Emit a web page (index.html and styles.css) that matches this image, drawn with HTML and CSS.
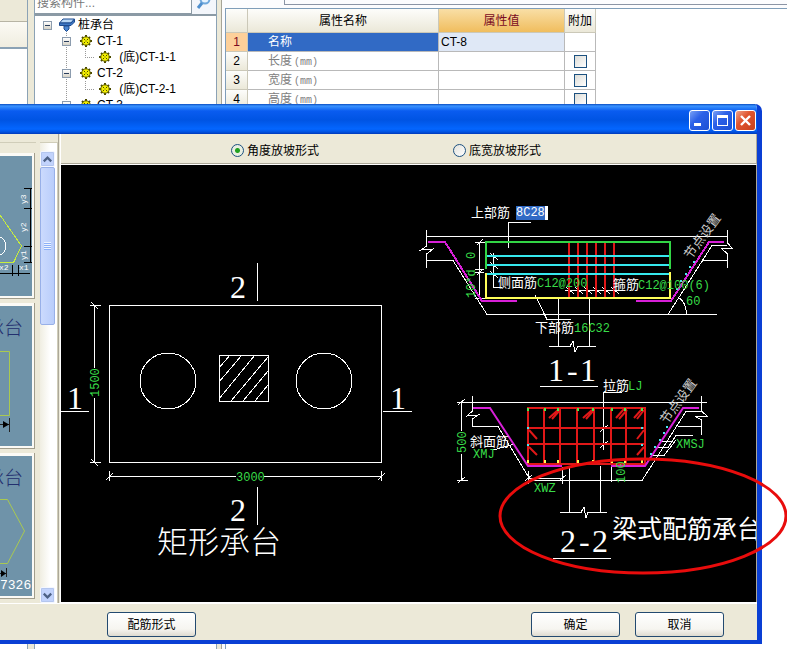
FILE: index.html
```html
<!DOCTYPE html>
<html lang="zh-CN">
<head>
<meta charset="utf-8">
<title>桩承台</title>
<link rel="stylesheet" href="styles.css">
</head>
<body>
<svg class="defs" aria-hidden="true">
  <symbol id="gear" viewBox="0 0 12 12">
    <path d="M6 0v12M0 6h12M2 2l8 8M10 2l-8 8" stroke="#4c4a00" stroke-width="2"/>
    <circle cx="6" cy="6" r="4.2" fill="#f4f000" stroke="#5a5800"/>
    <path d="M4 4h1v1h-1zM7 4h1v1h-1zM5.500 5.500h1v1h-1zM4 7h1v1h-1zM7 7h1v1h-1z" fill="#4c4a00"/>
  </symbol>
  <symbol id="pile" viewBox="0 0 16 14">
    <path d="M4 1H15.500L12 5H.5z" fill="#b9d8f6" stroke="#1d4b8f"/>
    <path d="M.5 5H12L15.500 1V4L12 7.500H.5z" fill="#3e78c4" stroke="#1d4b8f"/>
    <path d="M5 8H10V11L7.500 13.500L5 11z" fill="#4b87d2" stroke="#1d4b8f"/>
  </symbol>
</svg>

<main class="app">
  <aside class="rail"><div class="rail-head"></div><div class="rail-tab"></div><div class="rail-body"></div></aside>

  <section class="browser">
    <form class="search">
      <input type="text" placeholder="搜索构件..." aria-label="搜索构件">
      <button type="button" aria-label="搜索"><svg viewBox="0 0 16 16"><circle cx="9" cy="5" r="4.500" fill="#e6f3ff" stroke="#6fa8dc" stroke-width="2"/><path d="M6 9L2 14" stroke="#4f8fce" stroke-width="3"/></svg></button>
    </form>
    <div class="tree">
      <div class="node"><span class="cell"><button class="toggle" aria-label="折叠"></button></span><span class="cell"><svg class="pile"><use href="#pile"/></svg></span><span class="name">桩承台</span></div>
      <div class="node"><span class="cell"></span><span class="cell trunk"><button class="toggle" aria-label="折叠"></button></span><span class="cell"><svg class="gear"><use href="#gear"/></svg></span><span class="name"><span class="latin">CT-1</span></span></div>
      <div class="node"><span class="cell"></span><span class="cell trunk"></span><span class="cell elbow"></span><span class="cell"><svg class="gear"><use href="#gear"/></svg></span><span class="name"><span class="latin"> (</span>底<span class="latin">)CT-1-1</span></span></div>
      <div class="node"><span class="cell"></span><span class="cell trunk"><button class="toggle" aria-label="折叠"></button></span><span class="cell"><svg class="gear"><use href="#gear"/></svg></span><span class="name"><span class="latin">CT-2</span></span></div>
      <div class="node"><span class="cell"></span><span class="cell trunk"></span><span class="cell elbow"></span><span class="cell"><svg class="gear"><use href="#gear"/></svg></span><span class="name"><span class="latin"> (</span>底<span class="latin">)CT-2-1</span></span></div>
      <div class="node"><span class="cell"></span><span class="cell trunk"><button class="toggle" aria-label="折叠"></button></span><span class="cell"><svg class="gear"><use href="#gear"/></svg></span><span class="name"><span class="latin">CT-3</span></span></div>
    </div>
  </section>

  <section class="props">
    <div class="props-tab"></div>
    <div class="props-body">
      <table>
        <thead><tr><th class="num"></th><th class="attr">属性名称</th><th class="value current">属性值</th><th class="extra">附加</th></tr></thead>
        <tbody>
          <tr class="selected"><th>1</th><td class="attr">名称</td><td class="value"><span class="latin">CT-8</span></td><td></td></tr>
          <tr><th>2</th><td class="attr">长度<span class="unit">(mm)</span></td><td></td><td class="extra"><input type="checkbox" aria-label="长度附加"></td></tr>
          <tr><th>3</th><td class="attr">宽度<span class="unit">(mm)</span></td><td></td><td class="extra"><input type="checkbox" aria-label="宽度附加"></td></tr>
          <tr><th>4</th><td class="attr">高度<span class="unit">(mm)</span></td><td></td><td class="extra"><input type="checkbox" aria-label="高度附加"></td></tr>
        </tbody>
      </table>
    </div>
  </section>
</main>

<div class="dialog" role="dialog" aria-label="矩形承台">
  <header class="titlebar">
    <button aria-label="最小化"><svg viewBox="0 0 19 19"><path d="M4 12h7v3H4z" fill="#fff"/></svg></button>
    <button aria-label="最大化"><svg viewBox="0 0 19 19"><path d="M4 4h11v11H4zM5 7v7h9V7z" fill="#fff" fill-rule="evenodd"/></svg></button>
    <button class="close" aria-label="关闭"><svg viewBox="0 0 19 19"><path d="M5 5l9 9M14 5l-9 9" stroke="#fff" stroke-width="2.400"/></svg></button>
  </header>

  <div class="workspace">
    <aside class="shapes">
      <div class="cards">
        <div class="card"><svg viewBox="0 156 32 140">
          <g fill="none" shape-rendering="crispEdges"><path d="M0 215L21.500 246L13.500 262.500H0" stroke="#c8ee3c"/><circle cx="-4" cy="246" r="10" stroke="#fff"/>
          <path d="M30.500 188V263M24 188.500h8M24 208.500h8M24 246.500h8M24 262.500h8M0 273.500h30M12.500 265v11M18.500 265v11" stroke="#000"/></g>
          <g class="tiny"><text transform="translate(26 204) rotate(-90)">y3</text><text transform="translate(26 232) rotate(-90)">y2</text><text transform="translate(26 260) rotate(-90)">y1</text><text x="-1" y="270">x2</text><text x="19" y="270">x1</text></g>
        </svg></div>
        <div class="card"><svg viewBox="0 306 32 140">
          <text class="card-title" x="23" y="335">承台</text>
          <path d="M0 351.500H9.500V415.500H0" fill="none" stroke="#a9c951"/>
          <path d="M0 424.500H9M9.500 418v14" stroke="#222"/><path d="M3 421l6 3.500l-6 3.500z"/>
        </svg></div>
        <div class="card"><svg viewBox="0 456 32 140">
          <text class="card-title" x="23" y="485">承台</text>
          <path d="M0 499.500H7.500L24.500 531L7.500 563.500H0" fill="none" stroke="#a9c951"/>
          <path d="M0 573.500H6M6.500 568v9" stroke="#222"/><path d="M1 570l5 3.500l-5 3.500z"/>
          <text class="count" x="0" y="589">7326</text>
        </svg></div>
      </div>
      <div class="scrollbar">
        <button aria-label="向上滚动"><svg viewBox="0 0 14 14"><path d="M3 9l4-4l4 4" fill="none" stroke="#4d6185" stroke-width="2.400"/></svg></button>
        <div class="thumb"><i></i></div>
        <div class="track"></div>
        <button aria-label="向下滚动"><svg viewBox="0 0 14 14"><path d="M3 5l4 4l4-4" fill="none" stroke="#4d6185" stroke-width="2.400"/></svg></button>
      </div>
    </aside>

    <section class="detail">
      <div class="options">
        <label><input type="radio" name="slope" checked>角度放坡形式</label>
        <label><input type="radio" name="slope">底宽放坡形式</label>
      </div>
      <svg class="drawing" viewBox="61 165 695 437">
        <!-- plan view -->
        <g class="line">
          <path d="M109.500 305.500H381.500V462.500H109.500zM219.500 355.500H268.500V401.500H219.500z"/>
          <circle cx="168" cy="381" r="28"/><circle cx="324" cy="381" r="28"/>
          <path d="M219 368L230 355M219 382L242 355M219 399L255 355M231 401L268 357M243 401L268 371M255 401L268 385"/>
          <path d="M257.500 263V301M257.500 487V525M61 411.500H89M383 411.500H412"/>
          <path d="M94.500 305V368M94.500 398V463M90 305.500H101M90 462.500H101M91 302l7 7M91 459l7 7"/>
          <path d="M109 476.500H236M264 476.500H382M109.500 471V481M381.500 471V481M106 480l7-7M378 480l7-7"/>
        </g>
        <g class="mark"><text x="230" y="298">2</text><text x="230" y="521">2</text><text x="67" y="409">1</text><text x="390" y="409">1</text></g>
        <text class="caption" x="157" y="553">矩形承台</text>
        <g class="dim"><text x="236" y="481">3000</text><text transform="translate(99 397) rotate(-90)">1500</text></g>

        <!-- section 1-1 -->
        <g class="line">
          <path d="M426 236.500H727M426.500 230V246L421 250L433 249L426.500 254V268M426 260.500H453L487 314.500H717"/>
          <path d="M479.500 242V299M475 242.500H486M475 269.500H484M475 272.500H484M475 298.500H486M477 245l6-6M477 275l6-6"/>
          <path d="M531 222.500H508.500V248M493.500 253V287.500H502M490 253l8 7M490 262l8 7M490 271l8 7"/>
          <path d="M535 295L547 319.500H571M558.500 299V347M589.500 299V347M549 346.500H570L573 341L575 352L578 346.500H596"/>
          <path d="M565 290.500H625M566 287l8 7M575 287l8 7M584 287l8 7M593 287l8 7M602 287l8 7M611 287l8 7"/>
          <path d="M668 314.500L712 245.500H727M700 264L703 260.500H727M727.500 230V243L732 248H721L727.500 254V268M678 297Q686 302 686.500 314"/>
          <path d="M540 386.500H598"/>
        </g>
        <g class="red"><path d="M569 242V298M578 242V298M587 242V298M596 242V298M605 242V298M614 242V298"/></g>
        <g class="bar"><path stroke="#36e8ee" d="M487 256H670M487 265H670M487 274H670"/><path stroke="#32d545" d="M486 269V242H670V269"/><path stroke="#ffff58" d="M486 273V298H670V272"/><path stroke="#d820d8" d="M428 242H445L482 301H517M636 301H671L709 242H724"/></g>
        <path class="dots" d="M693 261h2v2h-2zM689 266h2v2h-2zM685 273h2v2h-2zM680 280h2v2h-2zM676 288h2v2h-2z"/>
        <g class="note"><text x="471" y="217">上部筋</text><text x="498" y="287">侧面筋</text><text x="613" y="289">箍筋</text><text x="535" y="332">下部筋</text><text class="tilt" transform="translate(706 239) rotate(-54)">节点设置</text></g>
        <g class="dim"><text x="537" y="287">C12@200</text><text x="638" y="289">C12@100(6)</text><text x="574" y="332">16C32</text><text x="686" y="305">60</text><text transform="translate(475 259) rotate(-90)">0</text><text transform="translate(475 298) rotate(-90)">10*d</text></g>
        <text class="mark" x="548 567 580" y="381">1-1</text>
        <foreignObject x="516" y="206" width="32" height="14"><input class="bar-edit" type="text" value="8C28" aria-label="上部筋"></foreignObject>

        <!-- section 2-2 -->
        <g class="line">
          <path d="M457 402.500H707M461.500 402V431M461.500 454V480M457 480.500H468M458 405l7-6M458 483l7-6"/>
          <path d="M472.500 396V411L467 416L478 415L472.500 419V426.500H498L528 476M493 450L515 444"/>
          <path d="M528 480.500H642L686 411.500H701M528 478.500H562M528.500 471V484M562.500 467V484M525 481l7-6M559 481l7-6"/>
          <path d="M569.500 466V512M600.500 466V512M560 512.500H581L584 507L586 518L588 512.500H607"/>
          <path d="M622 392.500H603.500V450M600 432l8-7M600 448l8-7M611.500 465V482"/>
          <path d="M701.500 396V411L707 416H695L701.500 420V435M701 426.500H678M693 435.500H676L668 447.500H656M676 440L664 455.500H651M660 441.500H672"/>
          <path d="M553 558.500H611"/>
        </g>
        <g class="red"><path d="M528 408H645V464H528zM528 428H645M528 444H645M544 408V464M560 408V464M577 408V464M594 408V464M611 408V464M626 408V464"/><path d="M549 418l9-8M552 419l8-9M583 418l9-8M586 419l8-9M616 418l8-9M619 419l8-9M634 418l8-9M637 419l7-9M529 430l8 9M529 447l8 8M644 430l-7 9M644 447l-7 8" shape-rendering="auto"/></g>
        <path class="magenta" d="M473 408H490L528 466H562M611 466H645L683 408H699"/>
        <g fill="#4be84b"><path d="M527 408h2v3h-2zM544 408h2v3h-2zM557 408h2v3h-2zM577 408h2v3h-2zM592 408h2v3h-2zM611 408h2v3h-2zM624 408h2v3h-2zM641 408h2v3h-2z"/></g>
        <g fill="#ffff58"><path d="M527 460h2v3h-2zM544 460h2v3h-2zM557 460h2v3h-2zM577 460h2v3h-2zM592 460h2v3h-2zM611 460h2v3h-2zM624 460h2v3h-2zM641 460h2v3h-2z"/></g>
        <path class="dots" d="M527 427h2v2h-2zM527 444h2v2h-2zM641 427h2v2h-2zM641 444h2v2h-2zM666 426h2v2h-2zM663 432h2v2h-2zM659 439h2v2h-2zM654 446h2v2h-2zM650 453h2v2h-2z"/>
        <g class="note"><text x="470" y="446">斜面筋</text><text x="603" y="390">拉筋</text><text class="tilt" transform="translate(682 404) rotate(-54)">节点设置</text></g>
        <g class="dim"><text x="473" y="458">XMJ</text><text x="534" y="492">XWZ</text><text x="676" y="448">XMSJ</text><text x="628" y="390">LJ</text><text transform="translate(466 453) rotate(-90)">500</text><text transform="translate(625 483) rotate(-90)">100</text></g>
        <text class="mark" x="560 579 592" y="552">2-2</text>
        <text class="type-name" x="612" y="538">梁式配筋承台</text>
      </svg>
    </section>
  </div>

  <footer class="actions">
    <button>配筋形式</button>
    <button class="ok">确定</button>
    <button>取消</button>
  </footer>
</div>

<svg class="callout" viewBox="0 0 787 649" aria-hidden="true"><ellipse cx="643" cy="516" rx="143" ry="57"/></svg>
</body>
</html>
```
FILE: styles.css
```css
* { box-sizing: border-box; }
body {
  margin: 0;
  height: 100vh;
  position: relative;
  overflow: hidden;
  background: #fff;
  color: #000;
  font: 12px/16px "Liberation Sans", "Noto Sans CJK SC", sans-serif;
}
button, input { font: inherit; margin: 0; padding: 0; }
svg { display: block; }
.defs { position: absolute; width: 0; height: 0; }
.latin { white-space: pre; }

/* main window behind the dialog */
.app { display: flex; height: 100%; background: #ece9d8; }
.rail { width: 28px; margin-right: 6px; display: flex; flex-direction: column; border-right: 1px solid #8ba2b5; }
.rail-head { height: 22px; border-bottom: 1px solid #b7b4a4; }
.rail-tab { height: 27px; background: linear-gradient(#fbfaf4, #f0ede0); border-bottom: 2px solid #8ba2b5; }
.rail-body { flex: 1; background: #fff; }
.browser { width: 183px; display: flex; flex-direction: column; border: solid #8ba2b5; border-width: 0 1px; background: #fff; }
.search { display: flex; height: 16px; flex: none; border-bottom: 2px solid #8b9aa5; }
.search input { flex: 1; min-width: 0; height: 14px; border: 0; border-right: 1px solid #8b9aa5; border-bottom: 1px solid #8b9aa5; padding: 0 2px 8px; color: #777; background: #fff; }
.search input::placeholder { color: #777; }
.search button { width: 24px; border: 0; background: #f3f6fb; display: grid; justify-content: center; overflow: hidden; }
.search svg { width: 16px; height: 16px; margin-top: -6px; }
.tree { padding: 1px 0 0 3px; overflow: hidden; }
.node { display: flex; height: 16px; }
.cell { width: 19px; flex: none; display: grid; place-items: center; position: relative; }
.trunk { background: repeating-linear-gradient(#999 0 1px, transparent 1px 2px) 9px 0 / 1px 100% no-repeat; }
.elbow {
  background:
    repeating-linear-gradient(#999 0 1px, transparent 1px 2px) 9px 0 / 1px 8px no-repeat,
    repeating-linear-gradient(90deg, #999 0 1px, transparent 1px 2px) 9px 8px / 10px 1px no-repeat;
}
.toggle { width: 9px; height: 9px; border: 1px solid #8c9cae; background: linear-gradient(#2a3e5c, #2a3e5c) center / 5px 1px no-repeat, linear-gradient(#fff, #d6d2c6); }
.pile { width: 16px; height: 14px; }
.gear { width: 12px; height: 12px; }
.name { padding-left: 2px; white-space: nowrap; }

.props { flex: 1; min-width: 0; margin-left: 4px; border-left: 1px solid #a6a497; background: #fcfcfe; padding-left: 3px; display: flex; flex-direction: column; }
.props-tab { height: 5px; flex: none; margin: 0 0 3px 59px; border: solid #8b94a5; border-width: 0 0 1px 1px; }
.props-body { flex: 1; border: solid #7f9db9; border-width: 1px 0 0 1px; background: #fff; }
table { border-collapse: separate; border-spacing: 0; table-layout: fixed; width: 370px; }
th, td { padding: 0; height: 19px; line-height: 18px; border: solid #b9b9b9; border-width: 0 1px 1px 0; font-weight: 400; text-align: left; }
th { text-align: center; background: linear-gradient(#fdfdfb, #ebe8d8); border-color: #cbc8b8; }
thead th { height: 24px; padding-top: 2px; line-height: 21px; }
th.num { width: 22px; }
th.value { width: 126px; }
th.extra { width: 31px; }
th.current { background: linear-gradient(#f9dfa6, #f0bd5e); color: #7a0a22; }
td.attr { padding-left: 20px; color: #808080; }
td.value { padding-left: 2px; background: #dfe8f6; }
td.extra { text-align: center; }
.unit { font: 10px "Liberation Mono", monospace; padding-left: 2px; }
.selected th { background: #fdd09a; color: #7a0a22; }
.selected td.attr { background: #316ac5; color: #fff; }
td input { appearance: none; display: block; width: 13px; height: 13px; margin: 1px auto 0; border: 1px solid #1c5180; background: linear-gradient(135deg, #dcdcd7, #fff); }

/* dialog */
.dialog {
  position: absolute;
  inset: 104px 25px 5px 0;
  display: flex;
  flex-direction: column;
  border: solid #0a3fd4;
  border-width: 0 5px 4px 0;
  border-radius: 0 7px 0 0;
  background: #ece9d8;
  overflow: hidden;
}
.titlebar {
  height: 30px;
  flex: none;
  margin-right: -5px;
  padding: 6px 6px 0 0;
  display: flex;
  justify-content: flex-end;
  gap: 2px;
  background: linear-gradient(#0a4cc0 0, #3a93ff 2px, #0a5cf0 7px, #0054e3 16px, #0466ff 25px, #0052e0 28px, #0038b8 30px);
}
.titlebar button { width: 21px; height: 21px; border: 1px solid #fff; border-radius: 3px; background: linear-gradient(135deg, #7aa1f5, #2b60e8 40%, #1c50d4); }
.titlebar .close { background: linear-gradient(135deg, #f0a48c, #e0552f 40%, #c8401c); }
.workspace { flex: 1; min-height: 0; display: flex; }
.shapes { width: 59px; flex: none; padding-top: 8px; display: flex; border-right: 1px solid #aca899; }
.cards { width: 36px; padding-top: 10px; display: flex; flex-direction: column; gap: 4px; border-top: 1px solid #d0cdb9; overflow: hidden; }
.card { height: 146px; flex: none; padding: 3px 1px 2px 0; margin-right: 1px; border: solid #a19d8c; border-width: 0 1px 1px 0; background: #fbfaf5; }
.card svg { width: 32px; height: 140px; background: #6f93a9; }
.tiny { font: 8px "Liberation Mono", monospace; fill: #fff; }
.card-title { font: 19px "Noto Sans CJK SC", sans-serif; fill: #23306f; text-anchor: end; font-weight: 300; }
.count { font: 13px "Liberation Mono", monospace; fill: #fff; }
.scrollbar { flex: 1; margin-left: 4px; padding: 8px 2px 0 0; display: flex; flex-direction: column; border: solid #d0cdb9; border-width: 1px 1px 0 0; background: linear-gradient(90deg, #f0eee2, #fff 60%); }
.scrollbar button { width: 15px; height: 16px; flex: none; border: 1px solid #f4f7ff; border-radius: 2px; background: #c2d3fc; outline: 1px solid #b4c6ee; outline-offset: -2px; }
.thumb { height: 158px; display: grid; place-items: center; border: 1px solid #98b0e8; border-radius: 2px; background: linear-gradient(90deg, #cbdafd, #b9cdfb); width: 15px; }
.thumb i { width: 7px; height: 8px; background: repeating-linear-gradient(#eef4fe 0 1px, #8cb0f8 1px 2px); }
.track { flex: 1; }

.detail { flex: 1; min-width: 0; margin-left: 1px; display: flex; flex-direction: column; border: solid #fff; border-width: 0 0 1px 1px; }
.options { height: 31px; flex: none; padding: 3px 0 0 170px; display: flex; align-items: center; gap: 134px; border-right: 1px solid #aca899; border-bottom: 1px solid #fff; box-shadow: inset 0 -1px #aca899; }
.options label { display: flex; align-items: center; gap: 3px; }
.options input { appearance: none; width: 13px; height: 13px; border: 1px solid #1c5180; border-radius: 50%; background: linear-gradient(135deg, #e2e2dc, #fff); }
.options input:checked { background: radial-gradient(circle, #21a121 0 2px, #e9efe2 3px); }
.drawing { flex: 1; min-height: 0; width: 100%; background: #000; border-right: 1px solid #aca899; }
.line { fill: none; stroke: #fff; shape-rendering: crispEdges; }
.red { fill: none; stroke: #e01818; stroke-width: 2px; shape-rendering: crispEdges; }
.bar { fill: none; stroke-width: 2px; shape-rendering: crispEdges; }
.magenta { fill: none; stroke: #d820d8; stroke-width: 2px; }
.dots { fill: #48e8ee; }
.note { font: 13px "Noto Sans CJK SC", sans-serif; fill: #fff; }
.tilt { text-anchor: middle; fill: #ccc; }
.dim { font: 12px "Liberation Mono", monospace; fill: #38dc48; }
.mark { font: 32px "Liberation Serif", serif; fill: #fff; }
.caption { font: 300 31px "Noto Sans CJK SC", sans-serif; fill: #fff; }
.type-name { font: 25px "Noto Sans CJK SC", sans-serif; fill: #fff; }
.bar-edit { display: block; width: 100%; height: 14px; border: 0; color: #fff; font: 12px/14px "Liberation Mono", monospace; background: linear-gradient(90deg, #316ac5 29px, #fff 29px); }

.actions { height: 37px; flex: none; padding: 8px 33px 0 107px; display: flex; align-items: flex-start; gap: 15px; border-top: 1px solid #fff; }
.actions button { width: 89px; height: 25px; border: 1px solid #234a70; border-radius: 3px; background: linear-gradient(#fff, #f6f5f0 70%, #dedbd0); }
.actions .ok { margin-left: auto; }

/* review mark drawn over the whole screen */
.callout { position: absolute; inset: 0; width: 100%; height: 100%; pointer-events: none; }
.callout ellipse { fill: none; stroke: #e80c0c; stroke-width: 3px; }
```
